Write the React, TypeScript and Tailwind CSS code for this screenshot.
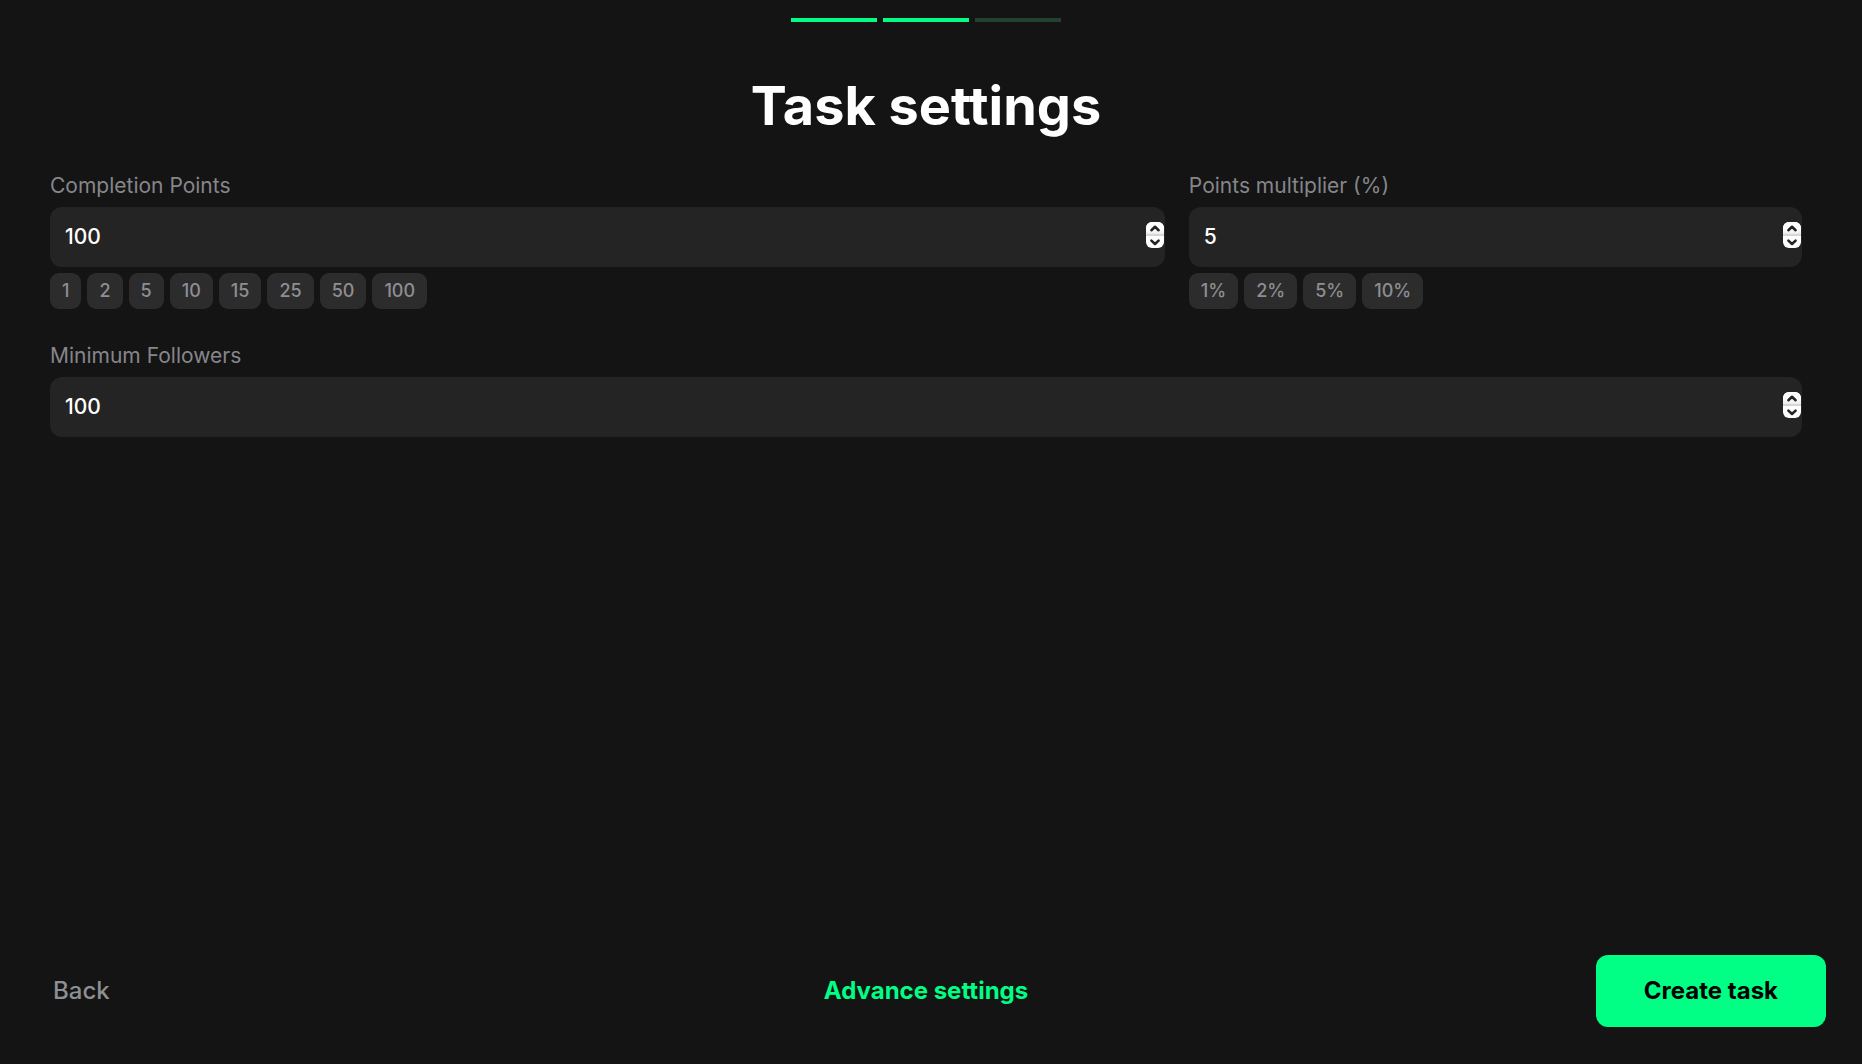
import { useState } from "react";

interface NumberFieldProps {
  id: string;
  label: string;
  value: number;
  onChange: (value: number) => void;
  presets?: number[];
  suffix?: string;
}

const STEPS = [1, 2, 3];
const CURRENT_STEP = 2;

const POINT_PRESETS = [1, 2, 5, 10, 15, 25, 50, 100];
const MULTIPLIER_PRESETS = [1, 2, 5, 10];

function NumberField({ id, label, value, onChange, presets, suffix = "" }: NumberFieldProps) {
  return (
    <div className="min-w-0">
      <label htmlFor={id} className="block text-[21px] leading-[30px] text-[#86868b]">
        {label}
      </label>

      <div className="relative mt-1.5">
        <input
          id={id}
          type="number"
          value={value}
          onChange={(e) => onChange(Number(e.target.value))}
          className="block h-[60px] w-full rounded-xl bg-[#242424] pl-[15px] pr-10 pb-0.5 text-[21px] font-medium text-white outline-none [appearance:textfield] [&::-webkit-inner-spin-button]:appearance-none"
        />

        {/* Stepper */}
        <div className="absolute inset-y-0 right-px flex items-center pb-1">
          <div className="flex w-[18px] flex-col overflow-hidden rounded-md bg-white text-[#242424]">
            <button
              type="button"
              aria-label={`Increase ${label}`}
              onClick={() => onChange(value + 1)}
              className="h-[13px] border-b border-[#d6d6d6] bg-linear-to-b from-white from-60% to-[#ececec]"
            >
              <svg viewBox="0 0 18 12" className="block h-3 w-[18px]" fill="none" stroke="currentColor" strokeWidth="2.6">
                <path d="M5.4 8.2 9 4.8l3.6 3.4" strokeLinecap="round" strokeLinejoin="round" />
              </svg>
            </button>
            <button
              type="button"
              aria-label={`Decrease ${label}`}
              onClick={() => onChange(value - 1)}
              className="h-[13px] border-t border-[#d6d6d6]"
            >
              <svg viewBox="0 0 18 12" className="block h-3 w-[18px]" fill="none" stroke="currentColor" strokeWidth="2.6">
                <path d="M5.4 4.6 9 8l3.6-3.4" strokeLinecap="round" strokeLinejoin="round" />
              </svg>
            </button>
          </div>
        </div>
      </div>

      {presets && (
        <div className="mt-1.5 flex flex-wrap gap-1.5">
          {presets.map((preset) => (
            <button
              key={preset}
              type="button"
              onClick={() => onChange(preset)}
              className="h-9 rounded-[9px] bg-[#2c2c2c] px-3 pb-0.5 text-[18px] font-medium text-[#8e8e93]"
            >
              {preset}
              {suffix}
            </button>
          ))}
        </div>
      )}
    </div>
  );
}

export default function App() {
  const [points, setPoints] = useState(100);
  const [multiplier, setMultiplier] = useState(5);
  const [followers, setFollowers] = useState(100);

  return (
    <div className="flex min-h-screen flex-col bg-[#141414] pr-2.5 font-['Inter',sans-serif]">
      {/* Progress */}
      <div className="flex justify-center gap-1.5 pt-[18px]">
        {STEPS.map((step) => (
          <div key={step} className={step <= CURRENT_STEP ? "h-1 w-[86px] bg-[#00ff84]" : "h-1 w-[86px] bg-[#20422e]"} />
        ))}
      </div>

      <main className="flex-1 px-[50px] pt-[51px]">
        <h1 className="text-center text-[54px] leading-[66px] font-bold text-white">Task settings</h1>

        <div className="mt-8 grid grid-cols-[20fr_11fr] gap-6">
          <NumberField
            id="points"
            label="Completion Points"
            value={points}
            onChange={setPoints}
            presets={POINT_PRESETS}
          />
          <NumberField
            id="multiplier"
            label="Points multiplier (%)"
            value={multiplier}
            onChange={setMultiplier}
            presets={MULTIPLIER_PRESETS}
            suffix="%"
          />
        </div>

        <div className="mt-8">
          <NumberField id="followers" label="Minimum Followers" value={followers} onChange={setFollowers} />
        </div>
      </main>

      {/* Footer */}
      <footer className="grid grid-cols-[1fr_auto_1fr] items-center px-[26px] pb-[37px] text-2xl">
        <button type="button" className="justify-self-start px-[27px] font-medium text-[#8e8e93]">
          Back
        </button>
        <button type="button" className="font-bold text-[#00ff84]">
          Advance settings
        </button>
        <button type="button" className="h-[72px] justify-self-end rounded-xl bg-[#00ff84] px-12 font-bold text-black">
          Create task
        </button>
      </footer>
    </div>
  );
}
